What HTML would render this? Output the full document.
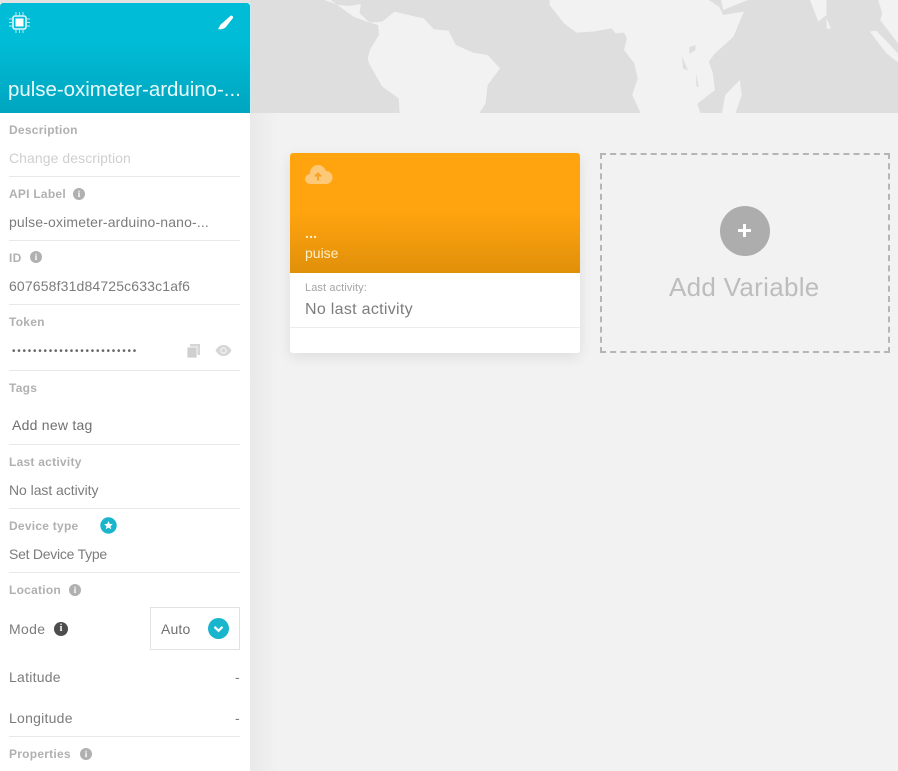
<!DOCTYPE html>
<html><head><meta charset="utf-8"><style>
html,body{margin:0;padding:0}
body{width:898px;height:771px;overflow:hidden;background:#f2f2f2;position:relative;font-family:"Liberation Sans",sans-serif}
.t{position:absolute;white-space:nowrap;line-height:1}
.lb{left:9px;font-size:12px;font-weight:bold;color:#b0b0b0;letter-spacing:.25px}
.v{left:9px;font-size:14px;color:#7c7c7c;letter-spacing:.15px}
.hr{position:absolute;left:9px;width:231px;height:1px;background:#e8e8e8}
.i{position:absolute;width:12px;height:12px;border-radius:50%;background:#b0b0b0;color:#fff;font:bold 9px/12px "Liberation Serif",serif;text-align:center}
</style></head><body>
<svg style="position:absolute;left:250px;top:0" width="648" height="130" viewBox="0 0 1568 390" preserveAspectRatio="none">
<rect width="1568" height="339" fill="#dedede"/>
<g fill="#f2f2f2">
<path d="M180 0L215 15L240 18L268 12L265 40L290 68L320 65L350 35L360 38L400 50L420 55L445 88L480 92L498 135L540 158L575 165L605 205L575 255L570 310L555 339L362 339L360 295L320 260L288 190L285 175L290 150L312 105L310 75L290 68L250 50L195 0Z"/>
<path d="M725 0L725 15L760 70L790 98L830 95L875 85L885 100L905 98L912 115L905 150L930 190L938 235L925 285L945 339L1090 339L1082 312L1125 270L1120 220L1110 185L1125 160L1170 110L1195 35L1145 45L1135 20L1110 0Z"/>
<path d="M1140 0L1145 30L1205 0Z"/>
<path d="M1355 0L1375 65L1395 45L1395 0Z"/>
<path d="M1395 55L1406 85L1395 87Z"/>
<path d="M1520 0L1530 40L1525 60L1568 130L1568 0Z"/>
<path d="M1500 95L1515 92L1568 160L1568 187L1540 160Z"/>
<path d="M1185 240L1190 285L1175 339L1142 339L1150 285Z"/>
</g>
<g fill="#dedede">
<path d="M1063 142L1078 135L1078 150L1063 162Z"/>
<path d="M1045 168L1060 212L1048 205Z"/>
<path d="M1080 220L1086 262L1080 258Z"/>
</g>
</svg>
<div style="position:absolute;left:250px;top:3px;width:1px;height:110px;background:#c6eef4"></div>
<div style="position:absolute;left:250px;top:113px;width:30px;height:658px;background:linear-gradient(90deg,#e9e9e9,#f2f2f2)"></div>
<div style="position:absolute;left:0;top:0;width:250px;height:771px;background:#fff"></div>
<div style="position:absolute;left:0;top:0;width:250px;height:3px;background:#e2e2e2"></div>
<div style="position:absolute;left:0;top:3px;width:250px;height:110px;border-radius:3px 3px 0 0;background:linear-gradient(180deg,#00bcd6 0%,#00bcd6 35%,#00a5bf 100%)"></div>
<svg style="position:absolute;left:8px;top:11px" width="23" height="23" viewBox="0 0 23 23" fill="none" stroke="#e4f7fa">
<rect x="5" y="5" width="13" height="13" rx="2" stroke-width="1.6"/><rect x="7.500" y="7.500" width="8" height="8" fill="#fff" stroke="none"/>
<path d="M8 1v3M11.500 1v3M15 1v3M8 19v3M11.500 19v3M15 19v3M1 8h3M1 11.500h3M1 15h3M19 8h3M19 11.500h3M19 15h3" stroke-width="1" opacity=".8"/>
</svg>
<svg style="position:absolute;left:217px;top:15px" width="17" height="16" viewBox="0 0 17 16"><path d="M13 1.200C14.500 0 16.500 1 16 3L10 10.500C8.500 13.500 4 15 1 14C2.500 12.500 2.500 9.500 5.500 8Z" fill="#fff"/></svg>
<div class="t" style="left:8px;top:80px;font-size:20.500px;color:#e9fafc;letter-spacing:-.03px">pulse-oximeter-arduino-...</div>

<div class="t lb" style="top:124px">Description</div>
<div class="t v" style="top:151px;color:#cfcfcf;letter-spacing:.07px">Change description</div>
<div class="hr" style="top:176px"></div>
<div class="t lb" style="top:188px">API Label</div><div class="i" style="left:73px;top:188px">i</div>
<div class="t v" style="top:215px">pulse-oximeter-arduino-nano-...</div>
<div class="hr" style="top:240px"></div>
<div class="t lb" style="top:252px">ID</div><div class="i" style="left:30px;top:251px">i</div>
<div class="t v" style="top:279px">607658f31d84725c633c1af6</div>
<div class="hr" style="top:304px"></div>
<div class="t lb" style="top:316px">Token</div>
<div class="t" style="left:12px;top:347px;font-size:10px;color:#666;letter-spacing:1.750px">••••••••••••••••••••••••</div>
<svg style="position:absolute;left:186px;top:343px" width="16" height="16" viewBox="0 0 16 16"><rect x="4" y="1" width="10" height="11" fill="#d6d6d6"/><rect x="1" y="4" width="10" height="11" fill="#cfcfcf" stroke="#fff" stroke-width=".8"/></svg>
<svg style="position:absolute;left:215px;top:344px" width="17" height="13" viewBox="0 0 17 13"><path d="M0.500 6.500C3 2 6 1 8.500 1S14 2 16.500 6.500C14 11 11 12 8.500 12S3 11 .500 6.500Z" fill="#d6d6d6"/><circle cx="8.500" cy="6.500" r="3.300" fill="#f2f2f2"/><circle cx="8.500" cy="6.500" r="2" fill="#d6d6d6"/></svg>
<div class="hr" style="top:370px"></div>
<div class="t lb" style="top:382px">Tags</div>
<div class="t v" style="left:12px;top:418px;color:#707070;letter-spacing:.25px">Add new tag</div>
<div class="hr" style="top:444px"></div>
<div class="t lb" style="top:456px">Last activity</div>
<div class="t v" style="top:483px;letter-spacing:-.05px">No last activity</div>
<div class="hr" style="top:508px"></div>
<div class="t lb" style="top:520px">Device type</div>
<svg style="position:absolute;left:100px;top:517px" width="17" height="17" viewBox="0 0 17 17"><circle cx="8.500" cy="8.500" r="8.200" fill="#18b5cc"/><path d="M8.500 4l1.300 2.900 3 .3-2.300 2 .7 3-2.700-1.600-2.700 1.600.7-3-2.300-2 3-.3z" fill="#fff"/></svg>
<div class="t v" style="top:547px;letter-spacing:-.25px">Set Device Type</div>
<div class="hr" style="top:572px"></div>
<div class="t lb" style="top:584px">Location</div><div class="i" style="left:69px;top:584px">i</div>
<div class="t v" style="top:622px;letter-spacing:.35px">Mode</div><div class="i" style="left:54px;top:622px;width:14px;height:14px;font-size:10px;line-height:14px;background:#4d4d4d">i</div>
<div style="position:absolute;left:150px;top:607px;width:88px;height:41px;border:1px solid #e2e2e2"></div>
<div class="t v" style="left:161px;top:622px;color:#707070">Auto</div>
<svg style="position:absolute;left:208px;top:618px" width="21" height="21" viewBox="0 0 21 21"><circle cx="10.500" cy="10.500" r="10.500" fill="#18b5cc"/><path d="M6.500 8.800l4 4 4-4" fill="none" stroke="#fff" stroke-width="2.200"/></svg>
<div class="t v" style="top:670px;letter-spacing:.25px">Latitude</div><div class="t v" style="left:235px;top:670px">-</div>
<div class="t v" style="top:711px;letter-spacing:.25px">Longitude</div><div class="t v" style="left:235px;top:711px">-</div>
<div class="hr" style="top:736px"></div>
<div class="t lb" style="top:748px">Properties</div><div class="i" style="left:80px;top:748px">i</div>

<div style="position:absolute;left:290px;top:153px;width:290px;height:200px;border-radius:3px;background:#fff;box-shadow:0 4px 14px rgba(0,0,0,.09);overflow:hidden">
<div style="height:120px;background:linear-gradient(180deg,#ffa30f 0%,#ffa30f 50%,#e0900a 100%)"></div>
<div style="position:absolute;left:0;top:174px;width:290px;height:1px;background:#ececec"></div>
</div>
<svg style="position:absolute;left:305px;top:165px" width="28" height="20" viewBox="0 0 28 20"><g fill="#fdc878"><circle cx="5" cy="14" r="5"/><circle cx="13" cy="8" r="8"/><circle cx="21" cy="12.500" r="6.500"/><rect x="5" y="12" width="17" height="7"/></g><path d="M13 15.500V8.500M10 11.500l3-3 3 3" fill="none" stroke="#f5a42a" stroke-width="2"/></svg>
<div class="t" style="left:305px;top:226px;font-size:14px;font-weight:bold;color:#ffeec8;letter-spacing:.2px">...</div>
<div class="t" style="left:305px;top:246px;font-size:14px;color:#ffeec8">puise</div>
<div class="t" style="left:305px;top:283px;font-size:11px;color:#a5a5a5;letter-spacing:.1px">Last activity:</div>
<div class="t" style="left:305px;top:302px;font-size:16px;color:#7d7d7d;letter-spacing:.3px">No last activity</div>

<div style="position:absolute;left:600px;top:153px;width:286px;height:196px;border:2px dashed #b5b5b5"></div>
<div style="position:absolute;left:720px;top:206px;width:50px;height:50px;border-radius:50%;background:#adadad"></div>
<div style="position:absolute;left:738px;top:229px;width:13px;height:3px;background:#fff"></div>
<div style="position:absolute;left:743px;top:224px;width:3px;height:13px;background:#fff"></div>
<div class="t" style="left:669px;top:274px;font-size:26px;color:#bdbdbd;letter-spacing:.3px">Add Variable</div>
</body></html>
